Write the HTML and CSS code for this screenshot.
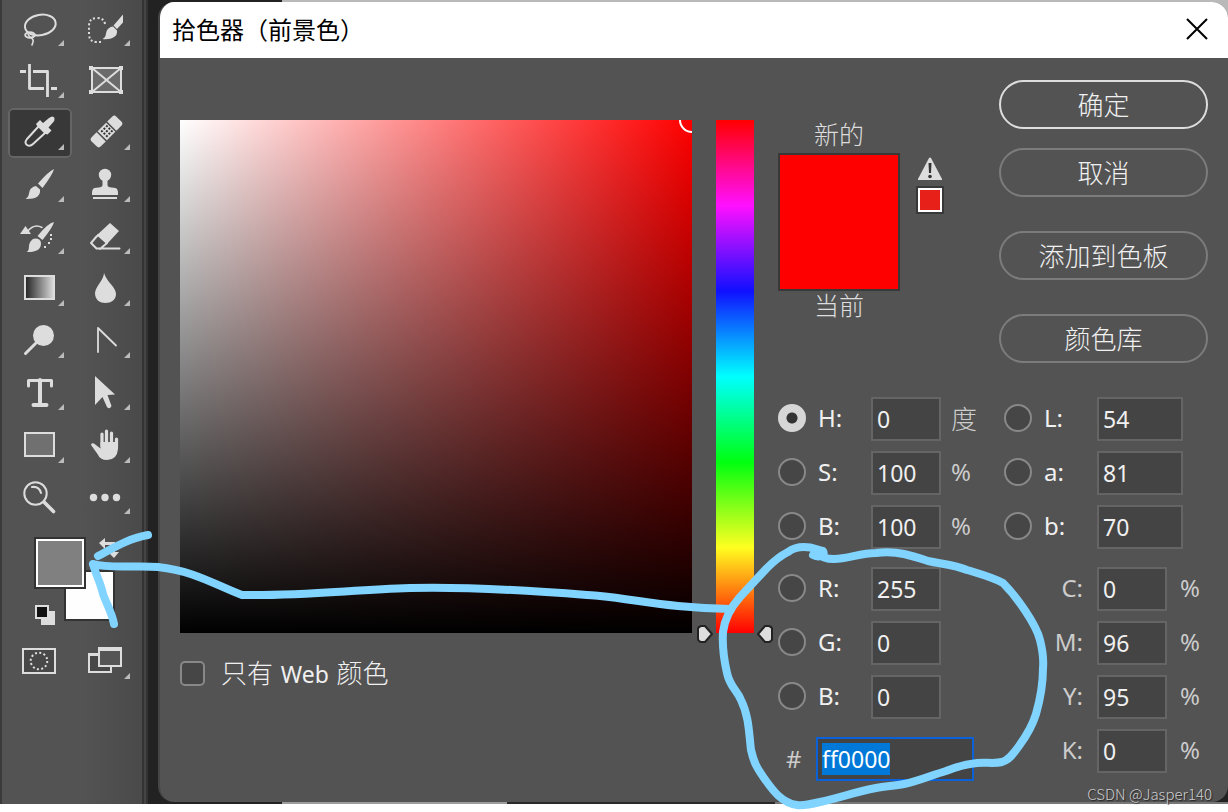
FILE: index.html
```html
<!DOCTYPE html>
<html lang="zh-CN">
<head>
<meta charset="utf-8">
<title>拾色器（前景色）</title>
<link rel="stylesheet" href="styles.css">
</head>
<body>
<div class="workspace">
  <aside class="toolbar" aria-label="工具">
    <div class="tools">
      <button class="tool" aria-label="套索"><svg viewBox="8 4 64 50"><g class="line"><ellipse cx="40.3" cy="25" rx="15.5" ry="10.2" transform="rotate(-10 40.3 25)"/><ellipse cx="30" cy="35" rx="4.8" ry="2.8"/><path d="M28 34q2 5 5 3M30 37q4 2 3 5l-1 3" stroke-width="1.6"/></g><path class="more" d="M64 40v6h-6z"/></svg></button>
      <button class="tool" aria-label="快速选择"><svg viewBox="74 4 64 50"><path class="line dots" stroke-dasharray="2 2.2" d="M105 24q-1-6-8-6q-8 0-8 8v8q0 8 8 8h4"/><path class="fill" d="M123 14.5v8l-6 6.5-3.5-3.5zM113 26.5l4 4c1 7-7 9.5-14.5 8.500 5-2 2-7 6-10.5q2-2 4.5-2z"/><path class="more" d="M130 40v6h-6z"/></svg></button>
      <button class="tool" aria-label="裁剪"><svg viewBox="8 56 64 50"><path class="line dots" stroke-width="2.8" d="M29.5 64v24.5H44M51 88.5h6M20 71.5h6M33 71.5h14.5V97"/><path class="more" d="M64 92v6h-6z"/></svg></button>
      <button class="tool" aria-label="画框"><svg viewBox="74 56 64 50"><path d="M92 68h29v24H92z" fill="#6b6b6b"/><path class="line" d="M92 68h29v24H92zl29 24M121 68 92 92"/><path class="fill" d="M89 66h4v4h-4zM119 66h4v4h-4zM89 90h4v4h-4zM119 90h4v4h-4z"/></svg></button>
      <button class="tool selected" aria-label="吸管"><svg viewBox="8 108 64 50"><path class="line" d="m38 127-11 12q-3 4 0 6 3 2 6-1l12-11"/><path class="fill" d="m36 124 4-4 3 3 6-5q4-3 5.5 0 .5 3-2 5l-4 4.5 3 3-4 4-3-1-7-7z"/><path class="more" d="M64 144v6h-6z"/></svg></button>
      <button class="tool" aria-label="修复画笔"><svg viewBox="74 108 64 50"><g transform="rotate(-45 106.5 131.5)"><path class="fill" d="M92 125h7v13h-7q-3 0-3-3v-7q0-3 3-3zM100.5 125h12v13h-12zM114 125h7q3 0 3 3v7q0 3-3 3h-7z"/><path d="M102.500 127h2v2h-2zM106 127h2v2h-2zM109.5 127h2v2h-2zM102.5 130.5h2v2h-2zM106 130.5h2v2h-2zM109.5 130.5h2v2h-2zM102.5 134h2v2h-2zM106 134h2v2h-2zM109.5 134h2v2h-2z" fill="#333"/></g><path class="more" d="M130 144v6h-6z"/></svg></button>
      <button class="tool" aria-label="画笔"><svg viewBox="8 160 64 50"><path class="fill" d="M54 169q-1 5-11.5 19L38 183.5Q49 171 54 169zM36 186l4 3.5q1 10-14.5 9.500c4-2 3-7 5-10q3-3 5.5-3z"/><path class="more" d="M64 196v6h-6z"/></svg></button>
      <button class="tool" aria-label="仿制图章"><svg viewBox="74 160 64 50"><circle class="fill" cx="105" cy="175" r="6.2"/><path class="fill" d="M102.500 179h5v6q0 2 4 2.5l4 .5q3 1 2.500 7H92q-.5-6 2.500-7l4-.5q4-.5 4-2.500zM93 197h24v2H93z"/><path class="more" d="M130 196v6h-6z"/></svg></button>
      <button class="tool" aria-label="历史记录画笔"><svg viewBox="8 212 64 50"><path class="fill" d="M54 222q-1 5-11.500 18L37.500 236Q48 223 54 222zM35 238.500q6 0 6 5 0 9-14.500 8.500c4-2 1-6 4-10.500q2-3 4.500-3zM25.500 226l5.500 8H20zM50 234h2v2h-2zM50 238h2v2h-2zM48 242h2v2h-2zM44 246h2v2h-2z"/><path class="line" stroke-width="1.5" d="M27 232q7-9 15-4.500"/><path class="more" d="M64 248v6h-6z"/></svg></button>
      <button class="tool" aria-label="橡皮擦"><svg viewBox="74 212 64 50"><path class="fill" d="m110 223 9 8-12 13-10-9z"/><path class="line" d="m97 236-6 7 5.5 5.5h23M100 249l7-6-9-8"/><path class="more" d="M130 248v6h-6z"/></svg></button>
      <button class="tool" aria-label="渐变"><svg viewBox="8 264 64 50"><defs><linearGradient id="tone"><stop stop-color="#222"/><stop offset="1" stop-color="#ddd"/></linearGradient></defs><path d="M25 276h29v23H25z" fill="url(#tone)" stroke="#ddd"/><path class="more" d="M64 300v6h-6z"/></svg></button>
      <button class="tool" aria-label="模糊"><svg viewBox="74 264 64 50"><path class="fill" d="M104 273q2 6 8 12.500 4 5 4 8.500c0 6-5 9-10.500 9S95 300 95 293q0-3 4-9 5-7 5-11z"/><path class="more" d="M130 300v6h-6z"/></svg></button>
      <button class="tool" aria-label="减淡"><svg viewBox="8 316 64 50"><circle class="fill" cx="43.500" cy="335.500" r="10.500"/><path class="line" stroke-width="3" d="m37 342-11.500 11.500"/><path class="more" d="M64 352v6h-6z"/></svg></button>
      <button class="tool" aria-label="钢笔"><svg viewBox="74 316 64 50"><path class="line" stroke-width="1.8" d="M98 352v-24l18 17.500"/><path class="more" d="M130 352v6h-6z"/></svg></button>
      <button class="tool" aria-label="文字"><svg viewBox="8 368 64 50"><path class="line" stroke-width="3" d="M28.500 386v-5.500h23v5.500"/><path class="line" stroke-width="4" d="M40 380v25M33.500 405h13"/><path class="more" d="M64 404v6h-6z"/></svg></button>
      <button class="tool" aria-label="路径选择"><svg viewBox="74 368 64 50"><path class="fill" d="m95 376 20 18.500-7.500.5 4 11q-2 4-4.500 1l-4.500-10-7.500 8z"/><path class="more" d="M130 404v6h-6z"/></svg></button>
      <button class="tool" aria-label="矩形"><svg viewBox="8 420 64 50"><path d="M25 433h29v23H25z" fill="#707070" stroke="#ddd"/><path class="more" d="M64 457v6h-6z"/></svg></button>
      <button class="tool" aria-label="抓手"><svg viewBox="74 420 64 50"><path class="line" stroke-width="3.2" d="M102 446v-12M106.500 445v-14M111.500 446v-13M116.500 447v-8"/><path class="fill" d="M100.500 442h17.500v7q-1 11-11 11-7 0-9.500-6L91 445q0-2.500 3-1.500l6.500 5z"/><path class="more" d="M130 457v6h-6z"/></svg></button>
      <button class="tool" aria-label="缩放"><svg viewBox="8 472 64 50"><circle class="line" cx="35.500" cy="493.500" r="11.200"/><path class="line" d="M32 487q7-1 9 6"/><path class="line" stroke-width="3.6" d="m44 502 9.500 9.500"/></svg></button>
      <button class="tool" aria-label="更多工具"><svg viewBox="74 472 64 50"><g class="fill"><circle cx="93.500" cy="497.500" r="3.700"/><circle cx="105" cy="497.500" r="3.700"/><circle cx="116.500" cy="497.500" r="3.700"/></g><path class="more" d="M130 508v6h-6z"/></svg></button>
    </div>
    <svg class="swatches" viewBox="8 528 130 104" role="img" aria-label="前景色与背景色">
      <path d="M65 571h49v49H65z" fill="#fefefe" stroke="#333"/>
      <path d="M34 537h52v52H34z" fill="#333"/><path d="M37 540h46v46H37z" fill="#808080" stroke="#fff"/>
      <path class="fill" d="m99 543 6-5v4h10v10h4l-5 6-6-6h4v-7h-7v4z"/>
      <path class="fill" d="M41 611h14v14H41z"/><path d="M36 606h12v12H36z" fill="#111" stroke="#ddd"/>
    </svg>
    <div class="tools">
      <button class="tool" aria-label="快速蒙版"><svg viewBox="8 636 64 50"><path d="M23 649h32v24H23z" fill="#484848" stroke="#ddd"/><circle cx="39" cy="661" r="8.300" fill="none" stroke="#ddd" stroke-dasharray="2 2.350"/></svg></button>
      <button class="tool" aria-label="屏幕模式"><svg viewBox="74 636 64 50"><path d="M89 654h22v18H89z" fill="#484848" stroke="#ddd"/><path class="fill" d="M88 653h24v3H88z"/><path d="M99 648h22v18H99z" fill="#555" stroke="#ddd"/><path class="fill" d="M98 647h24v4H98z"/><path class="more" d="M130 673v6h-6z"/></svg></button>
    </div>
  </aside>

  <main class="dialog">
    <header class="titlebar">
      <h1>拾色器（前景色）</h1>
      <button class="close" aria-label="关闭"><svg viewBox="0 0 22 22"><path d="m1 1 20 20M21 1 1 21"/></svg></button>
    </header>
    <div class="content">
      <section class="picker">
        <div class="field"><span class="ring"></span></div>
        <label class="web"><input type="checkbox"><span>只有 <span class="latin">Web</span> 颜色</span></label>
      </section>
      <div class="hue">
        <svg class="arrow arrow-left" viewBox="0 0 18 20"><path d="M5 2h4l7 8-7 8H5q-3-1-3-3V5q0-2 3-3z"/></svg>
        <svg class="arrow arrow-right" viewBox="0 0 18 20"><path d="M13 2H9l-7 8 7 8h4q3-1 3-3V5q0-2-3-3z"/></svg>
      </div>
      <section class="panel">
        <div class="summary">
          <div class="preview">
            <span>新的</span>
            <div class="sample"></div>
            <span>当前</span>
          </div>
          <div class="gamut">
            <svg viewBox="0 0 24 24" role="img" aria-label="溢色警告"><path class="fill" d="M11 1q1-1 2 0l11 21v1H0v-1z"/><path d="M10.500 6h3l-.5 10h-2z" fill="#333"/><circle cx="12" cy="19.500" r="1.800" fill="#333"/></svg>
            <button class="nearest" aria-label="最接近的可打印颜色"></button>
          </div>
          <div class="actions">
            <div class="pair"><button class="action primary">确定</button><button class="action">取消</button></div>
            <button class="action">添加到色板</button>
            <button class="action">颜色库</button>
          </div>
        </div>
        <form class="values">
          <div class="column">
            <div class="group">
              <div class="row"><label><input type="radio" name="axis" checked>H:</label><input class="box" aria-label="H" value="0"><span class="unit cjk">度</span></div>
              <div class="row"><label><input type="radio" name="axis">S:</label><input class="box" aria-label="S" value="100"><span class="unit">%</span></div>
              <div class="row"><label><input type="radio" name="axis">B:</label><input class="box" aria-label="B" value="100"><span class="unit">%</span></div>
            </div>
            <div class="group">
              <div class="row"><label><input type="radio" name="axis">R:</label><input class="box" aria-label="R" value="255"></div>
              <div class="row"><label><input type="radio" name="axis">G:</label><input class="box" aria-label="G" value="0"></div>
              <div class="row"><label><input type="radio" name="axis">B:</label><input class="box" aria-label="B" value="0"></div>
            </div>
            <div class="hex"><label for="hex">#</label><input class="box" id="hex" value="ff0000"></div>
          </div>
          <div class="column">
            <div class="group">
              <div class="row wide"><label><input type="radio" name="axis">L:</label><input class="box" aria-label="L" value="54"></div>
              <div class="row wide"><label><input type="radio" name="axis">a:</label><input class="box" aria-label="a" value="81"></div>
              <div class="row wide"><label><input type="radio" name="axis">b:</label><input class="box" aria-label="b" value="70"></div>
            </div>
            <div class="group ink">
              <div class="row"><label for="c">C:</label><input class="box" id="c" value="0"><span class="unit">%</span></div>
              <div class="row"><label for="m">M:</label><input class="box" id="m" value="96"><span class="unit">%</span></div>
              <div class="row"><label for="y">Y:</label><input class="box" id="y" value="95"><span class="unit">%</span></div>
              <div class="row"><label for="k">K:</label><input class="box" id="k" value="0"><span class="unit">%</span></div>
            </div>
          </div>
        </form>
      </section>
    </div>
  </main>

  <svg class="ink-notes" viewBox="0 0 1228 812" aria-hidden="true">
    <path d="M148 535C130 538 115 547 98 556M93 564C96 575 101 584 103 594C107 605 112 613 114 624M93 564C110 569 135 565 158 567C195 571 215 585 242 595C300 596 350 590 410 588C480 586 560 593 600 596C640 600 670 608 731 609"/>
    <path d="M813 555C819 558 826 556 823 551C815 549 813 547 804 547C798 547 792 549 788 552C778 557 773 562 767 568L740 597C732 606 725 616 723 632C722 648 724 660 727 673C730 687 737 690 741 700C749 716 749 734 751 750C754 763 757 768 764 778C773 791 782 803 797 805C804 806 812 804 820 802C842 797 855 792 876 788C886 786 894 786 904 784C919 781 932 775 946 771C956 767 966 764 977 763C986 762 994 764 1002 762C1009 760 1014 753 1019 746C1027 735 1032 727 1036 714C1040 700 1043 684 1043 668C1044 657 1042 648 1040 640C1037 628 1030 618 1024 609C1018 600 1010 590 1003 583C992 577 980 574 967 570C955 565 941 564 928 561C919 558 913 556 904 554C894 552 885 552 876 553C860 553 848 559 834 559C827 559 822 558 819 554"/>
  </svg>
  <span class="credit">CSDN @Jasper140</span>
</div>
<script src="main.js"></script>
</body>
</html>
```
FILE: styles.css
```css
* { box-sizing: border-box; }

body {
  margin: 0;
  background: #fff;
  color: #f0f0f0;
  font-family: "Noto Sans", "Noto Sans CJK SC", sans-serif;
  font-size: 24px;
  line-height: 30px;
}

button, input { font: inherit; color: inherit; margin: 0; padding: 0; }
button { background: none; border: 0; }
svg { display: block; stroke-width: 2; }

.workspace {
  position: relative;
  display: flex;
  min-height: calc(100vh - 8px);
  margin-bottom: 8px;
  padding: 2px 0;
  background:
    linear-gradient(90deg, #222 282px, #9c9c9c 282px 507px, #2b292b 507px 775px, #777 775px) bottom / 100% 2px no-repeat,
    linear-gradient(90deg, #222 282px, #b9b9b9 282px) top / 100% 16px no-repeat,
    #222;
}

.toolbar {
  flex: none;
  width: 148px;
  margin: -2px 10px -2px 0;
  padding: 4px 0 0 6px;
  border-left: 2px solid #3a3a3a;
  background: linear-gradient(90deg, #535353 80px, #4a4a4a 140px, #333 140px 142px, #444 142px 144px, #333 144px);
}

.tools { display: grid; grid-template-columns: 64px 64px; gap: 2px; }
.tool { height: 50px; border-radius: 5px; }
.tool svg { width: 64px; height: 50px; }
.selected { background: #383838; box-shadow: inset 0 0 0 2px #656565; }
.swatches { width: 130px; height: 104px; margin: 6px 0 4px; }
.fill { fill: #ddd; }
.line { fill: none; stroke: #ddd; stroke-linecap: round; stroke-linejoin: round; }
.dots { stroke-linecap: butt; }
.more { fill: #bbb; }

.dialog {
  flex: 1;
  min-width: 0;
  display: flex;
  flex-direction: column;
  overflow: hidden;
  border-left: 2px solid #454545;
  border-radius: 16px;
  background: #535353;
}

.titlebar {
  display: flex;
  align-items: center;
  justify-content: space-between;
  height: 56px;
  padding: 0 20px 2px 12px;
  background: #fff;
  color: #000;
}

.titlebar h1 {
  margin: 0;
  font-family: "Noto Sans CJK SC", sans-serif;
  font-size: 24px;
  font-weight: 400;
}

.close { width: 22px; height: 22px; }
.close path { fill: none; stroke: #000; }

.content { flex: 1; display: flex; gap: 24px; padding: 22px 20px 20px; }
.picker { flex: 1; padding-top: 40px; }

.field {
  position: relative;
  height: 513px;
  overflow: hidden;
  background: linear-gradient(to top, #000, transparent), linear-gradient(to right, #fff, #f00);
}

.ring {
  position: absolute;
  top: -13px;
  right: -13px;
  width: 26px;
  height: 26px;
  border: 2px solid #fff;
  border-radius: 50%;
}

.web {
  display: flex;
  align-items: center;
  gap: 16px;
  margin-top: 24px;
  font-family: "Noto Sans CJK SC", sans-serif;
  font-size: 26px;
  font-weight: 300;
}

.latin { padding: 0 2px; font-family: "Noto Sans", sans-serif; font-size: 23px; font-weight: 400; }

.web input {
  appearance: none;
  width: 25px;
  height: 25px;
  border: 2px solid #888;
  border-radius: 5px;
  background: #464646;
}

.hue {
  position: relative;
  width: 38px;
  height: 513px;
  margin-top: 40px;
  background: linear-gradient(#f00, #ff10ff, #1010ff, #0ff, #00ff10, #ffff20, #f00);
}

.arrow { position: absolute; bottom: -11px; width: 18px; height: 20px; }
.arrow path { fill: #ddd; stroke: #222; stroke-linejoin: round; }
.arrow-left { right: calc(100% + 2px); }
.arrow-right { left: calc(100% + 2px); }

.panel { width: 430px; }
.summary { display: flex; align-items: flex-start; margin-bottom: 34px; }

.preview {
  width: 122px;
  padding-top: 38px;
  text-align: center;
  font-family: "Noto Sans CJK SC", sans-serif;
  font-size: 25px;
  font-weight: 300;
  color: #ddd;
}

.preview span { display: block; }
.sample { height: 138px; margin: 5px 0 -2px; border: 2px solid #383838; background: #f00; }

.gamut { display: grid; gap: 5px; margin: 77px 0 0 16px; justify-items: center; }
.gamut svg { width: 24px; height: 24px; }

.nearest {
  width: 28px;
  height: 28px;
  border: 2px solid #383838;
  background: #e7211a;
  box-shadow: inset 0 0 0 2px #fff;
}

.actions { display: grid; gap: 34px; width: 209px; margin-left: auto; }
.pair { display: grid; gap: 19px; }

.action {
  height: 49px;
  padding-bottom: 2px;
  border: 2px solid #7c7c7c;
  border-radius: 25px;
  font-family: "Noto Sans CJK SC", sans-serif;
  font-size: 26px;
  font-weight: 300;
}

.primary { border-color: #ddd; }

.values { display: flex; gap: 26px; }
.column { display: grid; gap: 18px; align-content: start; width: 200px; }
.group { display: grid; gap: 10px; }
.row { display: grid; grid-template-columns: 93px 70px auto; align-items: center; }
.wide { grid-template-columns: 93px 86px; }
.row label { display: flex; align-items: center; gap: 12px; padding-bottom: 2px; }
.unit { padding: 0 0 2px 10px; color: #ccc; }
.cjk { font-family: "Noto Sans CJK SC", sans-serif; font-size: 26px; font-weight: 300; }

.row input[type="radio"] {
  appearance: none;
  width: 28px;
  height: 28px;
  border: 2px solid #888;
  border-radius: 50%;
  background: #464646;
}

.row input[type="radio"]:checked {
  border-color: #d6d6d6;
  background: radial-gradient(circle, #333 5px, #d6d6d6 6px);
}

.box {
  width: 100%;
  height: 44px;
  padding: 0 4px;
  border: 2px solid #656565;
  border-radius: 0;
  background: #444;
  outline: 0;
  font-size: 23px;
}

.ink label { justify-content: flex-end; padding-right: 14px; color: #ccc; }
.ink .unit { padding-left: 13px; }

.hex { display: grid; grid-template-columns: 38px 158px; align-items: center; }
.hex label { padding-left: 8px; color: #ccc; }
.hex .box { border-color: #0b61d8; }
.hex .box::selection { background: #0078d7; color: #fff; }

.ink-notes {
  position: absolute;
  top: 0;
  left: 0;
  width: 1228px;
  height: 812px;
  pointer-events: none;
}

.ink-notes path {
  fill: none;
  stroke: #80d4ff;
  stroke-width: 8;
  stroke-linecap: round;
  stroke-linejoin: round;
}

.credit {
  position: absolute;
  right: 16px;
  bottom: 0;
  font-family: "Noto Sans CJK SC", sans-serif;
  font-size: 15px;
  font-weight: 300;
  line-height: 20px;
  color: #ccc;
  text-shadow: 1px 1px 1px #222;
}
```
FILE: main.js
```js
const hex = document.getElementById("hex");
hex.focus();
hex.select();
```
